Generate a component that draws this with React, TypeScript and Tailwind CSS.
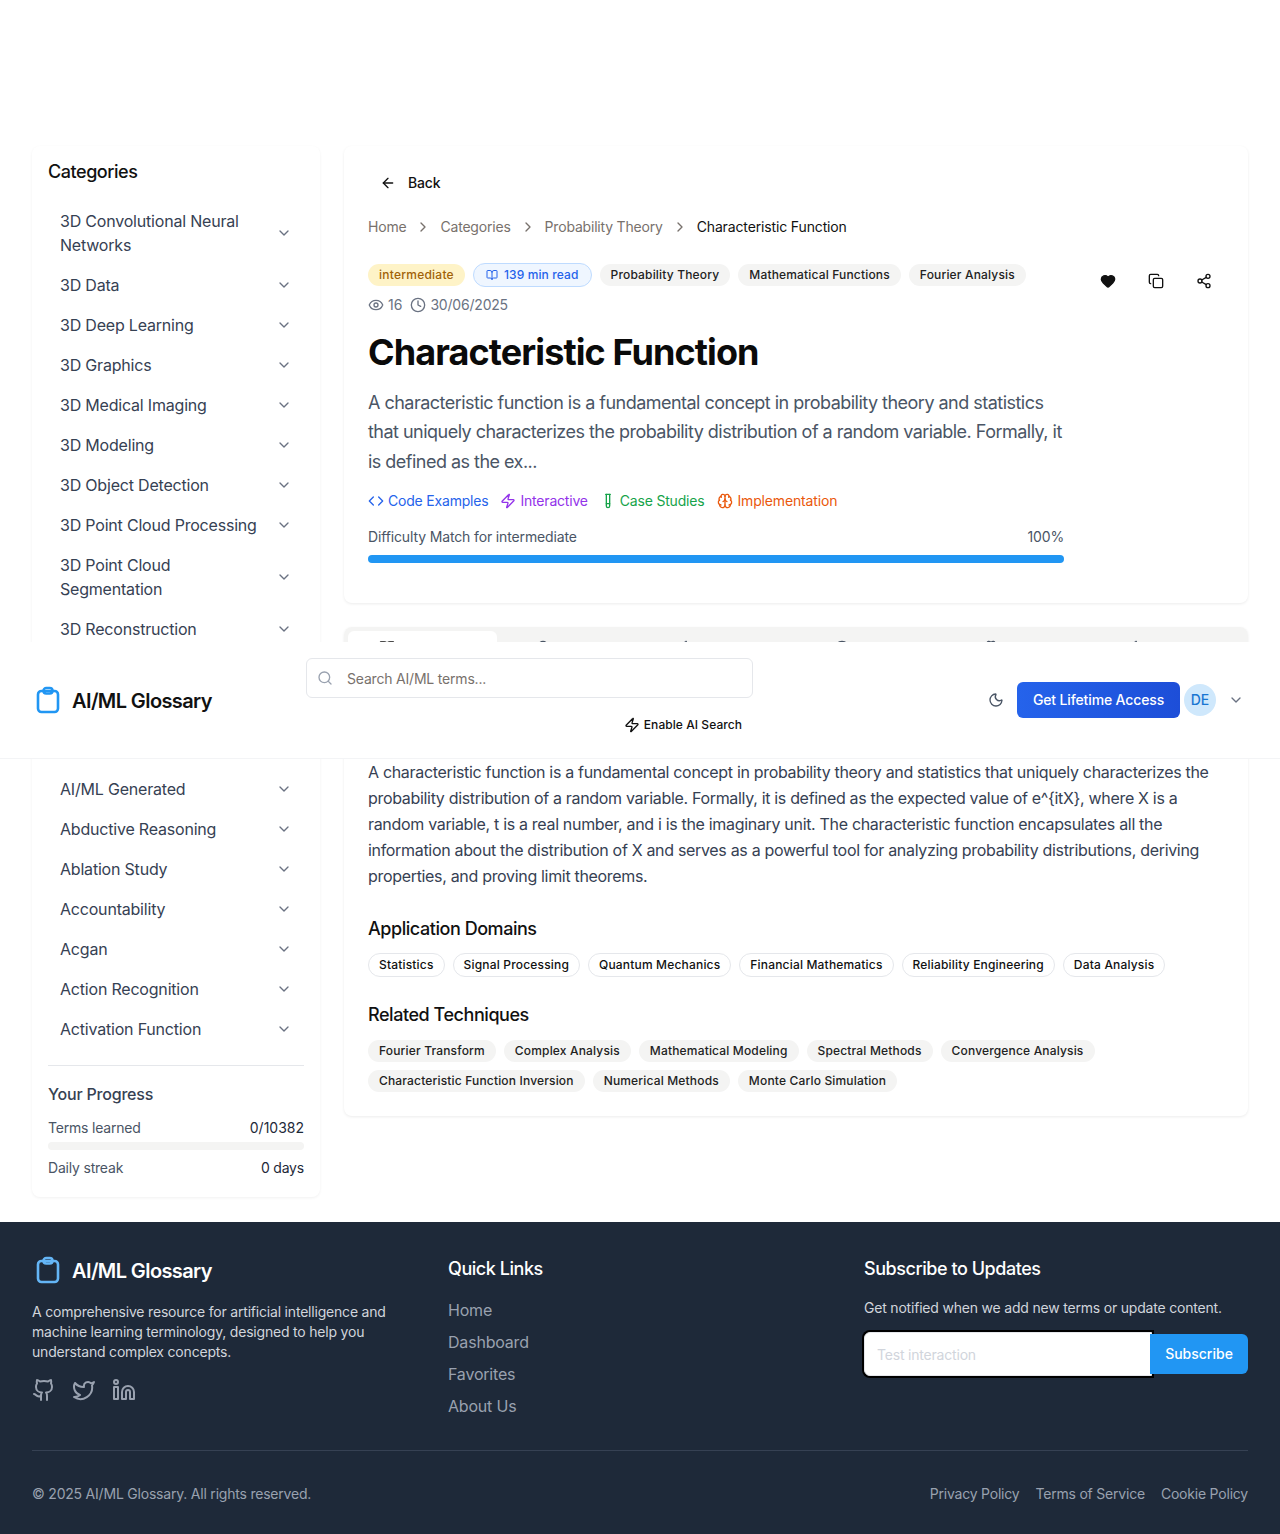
import {
  ArrowLeft,
  BookOpen,
  Brain,
  ChevronDown,
  ChevronRight,
  Clock,
  Code,
  Copy,
  Eye,
  Github,
  Heart,
  Lightbulb,
  Linkedin,
  Moon,
  Search,
  Share2,
  TestTube,
  Twitter,
  Zap,
} from "lucide-react";

const CATEGORIES = [
  "3D Convolutional Neural Networks",
  "3D Data",
  "3D Deep Learning",
  "3D Graphics",
  "3D Medical Imaging",
  "3D Modeling",
  "3D Object Detection",
  "3D Point Cloud Processing",
  "3D Point Cloud Segmentation",
  "3D Reconstruction",
];

const CATEGORIES_AFTER_HEADER = [
  "AI/ML Generated",
  "Abductive Reasoning",
  "Ablation Study",
  "Accountability",
  "Acgan",
  "Action Recognition",
  "Activation Function",
];

const DOMAINS = ["Statistics", "Signal Processing", "Quantum Mechanics", "Financial Mathematics", "Reliability Engineering", "Data Analysis"];
const TECHNIQUES = [
  "Fourier Transform",
  "Complex Analysis",
  "Mathematical Modeling",
  "Spectral Methods",
  "Convergence Analysis",
  "Characteristic Function Inversion",
  "Numerical Methods",
  "Monte Carlo Simulation",
];

const TABS = [
  { label: "Overview", Icon: BookOpen },
  { label: "Explore", Icon: Lightbulb },
  { label: "Examples", Icon: Zap },
  { label: "Related", Icon: Clock },
  { label: "Sample", Icon: Brain },
  { label: "Compare", Icon: Zap },
];

// clipboard mark: body with a small pill clip on top
function LogoIcon({ className }: { className: string }) {
  return (
    <svg className={className} width="32" height="32" viewBox="0 0 32 32" fill="none" stroke="currentColor" strokeWidth="2.6">
      <rect x="6" y="6" width="20" height="21" rx="3.5" />
      <rect x="11.5" y="3" width="9" height="5.5" rx="2.75" />
    </svg>
  );
}

function CategoryRow({ name }: { name: string }) {
  return (
    <div className="flex items-center justify-between gap-2 px-3 py-2">
      <span className="text-base tracking-[-0.0125em] text-gray-700">{name}</span>
      <ChevronDown className="shrink-0 text-gray-500" size={16} />
    </div>
  );
}

function Sidebar() {
  return (
    <aside className="w-[288px] shrink-0 self-start rounded-lg bg-white px-4 pt-[14px] pb-[19px] shadow-[0_1px_3px_rgba(0,0,0,0.06)]">
      <h2 className="text-lg leading-[24px] font-medium tracking-[-0.025em] text-[#111]">Categories</h2>
      <div className="mt-[17px]">
        {CATEGORIES.map((name) => (
          <CategoryRow key={name} name={name} />
        ))}
        {/* rows that sit under the sticky header */}
        <div className="h-[120px]" />
        {CATEGORIES_AFTER_HEADER.map((name) => (
          <CategoryRow key={name} name={name} />
        ))}
      </div>
      <div className="mt-4 border-t border-gray-200 pt-4">
        <h3 className="text-base font-medium tracking-[-0.0125em] text-gray-700">Your Progress</h3>
        <div className="mt-3 flex justify-between text-sm tracking-[-0.014em]">
          <span className="text-gray-600">Terms learned</span>
          <span className="tracking-normal text-gray-800">0/10382</span>
        </div>
        <div className="mt-[4px] h-2 rounded-full bg-[#f4f4f3]" />
        <div className="mt-2 flex justify-between text-sm tracking-[-0.014em]">
          <span className="text-gray-600">Daily streak</span>
          <span className="text-gray-800">0 days</span>
        </div>
      </div>
    </aside>
  );
}

function Tag({ label, outline }: { label: string; outline?: boolean }) {
  return (
    <span
      className={
        outline
          ? "rounded-full border border-gray-200 bg-white px-[10px] py-[3px] text-xs leading-[16px] font-medium tracking-[0.015em] text-[#111]"
          : "rounded-full bg-[#f4f4f3] px-[11px] py-[3px] text-xs leading-[16px] font-medium tracking-[0.014em] text-[#222]"
      }
    >
      {label}
    </span>
  );
}

function SummaryCard() {
  return (
    <section className="rounded-lg bg-white px-6 pt-[21px] pb-10 shadow-[0_1px_3px_rgba(0,0,0,0.08)]">
      <button className="flex items-center gap-3 px-3 py-1 text-sm leading-[24px] font-medium tracking-[-0.014em] text-[#111]">
        <ArrowLeft size={16} />
        Back
      </button>
      <nav className="mt-[18px] flex items-center text-sm leading-5 tracking-[-0.014em] text-[#78716c]">
        <span>Home</span>
        <ChevronRight className="mx-[9px]" size={16} />
        <span>Categories</span>
        <ChevronRight className="mx-[9px]" size={16} />
        <span>Probability Theory</span>
        <ChevronRight className="mx-[9px]" size={16} />
        <span className="tracking-[-0.01em] text-[#111]">Characteristic Function</span>
      </nav>
      <div className="mt-[26px] flex justify-between">
        <div className="w-[696px]">
          <div className="flex items-center gap-2">
            <span className="rounded-full bg-[#fef3c7] px-[11px] py-[3px] text-xs leading-[16px] font-medium tracking-[0.02em] text-[#a16207]">intermediate</span>
            <span className="flex items-center gap-[6px] rounded-full border border-blue-200 bg-blue-50 px-3 py-[3px] text-xs leading-[16px] font-medium tracking-[0.01em] text-[#2563eb]">
              <BookOpen size={12} />
              139 min read
            </span>
            <Tag label="Probability Theory" />
            <Tag label="Mathematical Functions" />
            <Tag label="Fourier Analysis" />
          </div>
          <div className="mt-[8px] flex items-center text-sm leading-5 text-gray-500">
            <Eye size={16} />
            <span className="ml-1">16</span>
            <Clock className="ml-2" size={16} />
            <span className="ml-1 tracking-[-0.014em]">30/06/2025</span>
          </div>
          <h1 className="mt-[17px] text-4xl leading-[40px] font-bold tracking-tight text-[#0a0a0a]">Characteristic Function</h1>
          <p className="mt-[16px] text-lg leading-[29.25px] tracking-[-0.029em] text-gray-600">
            A characteristic function is a fundamental concept in probability theory and statistics that uniquely characterizes the probability distribution of a random variable. Formally, it is defined as the ex...
          </p>
          <div className="mt-[15px] flex items-center gap-3 text-sm leading-5 tracking-[-0.014em]">
            <span className="flex items-center gap-1 text-[#2563eb]">
              <Code size={16} />
              Code Examples
            </span>
            <span className="flex items-center gap-1 text-[#9333ea]">
              <Zap size={16} />
              Interactive
            </span>
            <span className="flex items-center gap-1 text-[#16a34a]">
              <TestTube size={16} />
              Case Studies
            </span>
            <span className="ml-[1px] flex items-center gap-1 tracking-[-0.01em] text-[#ea580c]">
              <Brain size={16} />
              Implementation
            </span>
          </div>
          <div className="mt-4 flex justify-between text-sm leading-5 tracking-[-0.01em] text-gray-600">
            <span>Difficulty Match for intermediate</span>
            <span>100%</span>
          </div>
          <div className="mt-2 h-2 rounded-full bg-[#2196f3]" />
        </div>
        <div className="mt-[-2px] flex gap-2 self-start text-[#111]">
          <button className="flex h-10 w-10 items-center justify-center">
            <Heart className="fill-current" size={16} />
          </button>
          <button className="flex h-10 w-10 items-center justify-center">
            <Copy size={16} />
          </button>
          <button className="flex h-10 w-10 items-center justify-center">
            <Share2 size={16} />
          </button>
        </div>
      </div>
    </section>
  );
}

function DetailCard() {
  return (
    <section className="mt-6 rounded-lg bg-white shadow-[0_1px_3px_rgba(0,0,0,0.08)]">
      {/* Tab bar, mostly under the sticky header */}
      <div className="grid h-[42px] grid-cols-6 rounded-t-lg bg-[#f4f4f3] p-1 text-sm text-gray-600">
        {TABS.map(({ label, Icon }, i) => (
          <div key={label} className={i === 0 ? "flex items-center justify-center gap-2 rounded-md bg-white text-[#111]" : "flex items-center justify-center gap-2"}>
            <Icon size={16} />
            <span className="mt-[1px]">{label}</span>
          </div>
        ))}
      </div>
      <div className="px-6 pt-[90px] pb-6">
        <p className="text-base leading-[26px] tracking-[-0.02em] text-gray-700">
          A characteristic function is a fundamental concept in probability theory and statistics that uniquely characterizes the probability distribution of a random variable. Formally, it is defined as the expected value of e^&#123;itX&#125;, where X is a random variable, t is a real number, and i is the imaginary unit. The characteristic function encapsulates all the information about the distribution of X and serves as a powerful tool for analyzing probability distributions, deriving properties, and proving limit theorems.
        </p>
        <h3 className="mt-[26px] text-lg leading-7 font-medium tracking-[-0.025em] text-[#111]">Application Domains</h3>
        <div className="mt-[10px] flex flex-wrap gap-2">
          {DOMAINS.map((d) => (
            <Tag key={d} label={d} outline />
          ))}
        </div>
        <h3 className="mt-[24px] text-lg leading-7 font-medium tracking-[-0.025em] text-[#111]">Related Techniques</h3>
        <div className="mt-[11px] flex flex-wrap gap-2">
          {TECHNIQUES.map((t) => (
            <Tag key={t} label={t} />
          ))}
        </div>
      </div>
    </section>
  );
}

function Header() {
  return (
    <header className="absolute top-[642px] left-0 flex h-[117px] w-full items-center border-b border-gray-100 bg-white px-8">
      <div className="flex w-[274px] items-center gap-[8px] pt-[2px]">
        <LogoIcon className="text-[#2196f3]" />
        <span className="text-xl font-semibold tracking-[-0.03em] text-[#111]">AI/ML Glossary</span>
      </div>
      <div className="w-[447px] self-start pt-4">
        <div className="flex h-10 items-center gap-[14px] rounded-md border border-gray-200 bg-white pl-[10px] text-sm tracking-[-0.014em] text-[#78716c]">
          <Search className="text-gray-400" size={16} />
          <span className="pt-[1px]">Search AI/ML terms...</span>
        </div>
        <div className="mt-[19px] mr-[11px] flex items-center justify-end gap-1 text-xs leading-4 font-medium tracking-[0.005em] text-[#111]">
          <Zap size={16} />
          Enable AI Search
        </div>
      </div>
      <div className="ml-auto flex items-center">
        <Moon className="mr-[13px] text-gray-600" size={16} />
        <button className="h-9 w-[163px] rounded-md bg-linear-to-r from-[#2563eb] to-[#1d4ed8] text-sm font-medium tracking-[-0.01em] text-white">Get Lifetime Access</button>
        <span className="ml-1 flex h-8 w-8 items-center justify-center rounded-full bg-[#cfe8fc] text-sm font-medium text-[#1976d2]">DE</span>
        <ChevronDown className="mr-1 ml-3 text-gray-500" size={16} />
      </div>
    </header>
  );
}

function Footer() {
  return (
    <footer className="mt-[25px] h-[312px] bg-[#1e2939] px-8 pt-8">
      <div className="grid h-[197px] grid-cols-3 gap-8 border-b border-gray-700">
        <div>
          <div className="flex items-center gap-2 pt-[1px]">
            <LogoIcon className="text-[#64b5f6]" />
            <span className="text-xl font-semibold tracking-[-0.03em] text-white">AI/ML Glossary</span>
          </div>
          <p className="mt-[15px] text-sm leading-5 tracking-[-0.014em] text-gray-300">
            A comprehensive resource for artificial intelligence and machine learning terminology, designed to help you understand complex concepts.
          </p>
          <div className="mt-4 flex gap-4 text-gray-400">
            <Github size={24} />
            <Twitter size={24} />
            <Linkedin size={24} />
          </div>
        </div>
        <div>
          <h4 className="pt-[1px] text-lg leading-7 font-medium tracking-[-0.025em] text-white">Quick Links</h4>
          <ul className="mt-[15px] flex flex-col gap-2 text-base tracking-[-0.0125em] text-gray-400">
            <li>Home</li>
            <li>Dashboard</li>
            <li>Favorites</li>
            <li>About Us</li>
          </ul>
        </div>
        <div>
          <h4 className="pt-[1px] text-lg leading-7 font-medium tracking-[-0.025em] text-white">Subscribe to Updates</h4>
          <p className="mt-[15px] text-sm leading-5 tracking-[-0.014em] text-gray-300">Get notified when we add new terms or update content.</p>
          <div className="mt-[16px] flex h-10 items-center">
            <input
              className="mr-[-2px] h-11 min-w-0 flex-1 rounded-l-md border border-gray-200 bg-white px-3 text-sm tracking-[-0.014em] shadow-[0_0_0_2px_#000] outline-none placeholder:text-gray-300"
              placeholder="Test interaction"
            />
            <button className="relative h-10 w-[98px] rounded-r-md bg-[#2196f3] text-sm font-medium text-white">Subscribe</button>
          </div>
        </div>
      </div>
      <div className="flex justify-between pt-[33px] text-sm leading-5 tracking-[-0.015em] text-gray-400">
        <span>© 2025 AI/ML Glossary. All rights reserved.</span>
        <div className="flex gap-4">
          <span>Privacy Policy</span>
          <span>Terms of Service</span>
          <span>Cookie Policy</span>
        </div>
      </div>
    </footer>
  );
}

export default function App() {
  return (
    <div className="relative h-[1534px] overflow-hidden bg-white font-['Inter',sans-serif]">
      <Header />
      <div className="flex gap-6 px-8 pt-[146px]">
        <Sidebar />
        <main className="min-w-0 flex-1">
          <SummaryCard />
          <DetailCard />
        </main>
      </div>
      <Footer />
    </div>
  );
}
